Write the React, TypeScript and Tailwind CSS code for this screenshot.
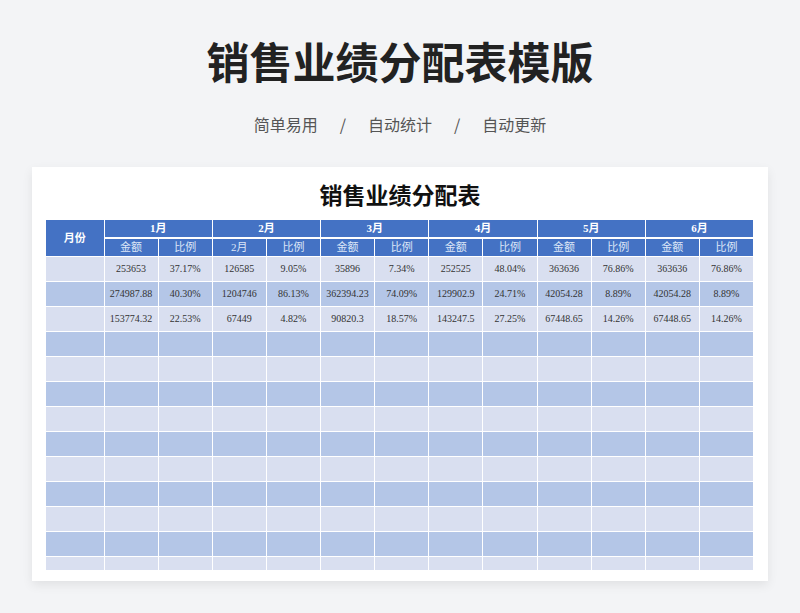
const months = ["1月", "2月", "3月", "4月", "5月", "6月"];
const sub = ["金额", "比例", "2月", "比例", "金额", "比例", "金额", "比例", "金额", "比例", "金额", "比例"];
const data = [
  ["253653", "37.17%", "126585", "9.05%", "35896", "7.34%", "252525", "48.04%", "363636", "76.86%", "363636", "76.86%"],
  ["274987.88", "40.30%", "1204746", "86.13%", "362394.23", "74.09%", "129902.9", "24.71%", "42054.28", "8.89%", "42054.28", "8.89%"],
  ["153774.32", "22.53%", "67449", "4.82%", "90820.3", "18.57%", "143247.5", "27.25%", "67448.65", "14.26%", "67448.65", "14.26%"],
];
const serif = { fontFamily: '"Liberation Serif", "Noto Sans CJK SC", serif' };

export default function App() {
  const rows = Array.from({ length: 13 }, (_, i) => data[i] ?? Array(12).fill(""));
  return (
    <div className="w-[800px] h-[613px] bg-[#f3f4f6] overflow-hidden flex flex-col items-center" style={{ fontFamily: '"Noto Sans CJK SC", sans-serif' }}>
      <h1 className="mt-[30px] text-[43px] leading-[60px] font-bold text-[#222]">销售业绩分配表模版</h1>
      <div className="mt-[22px] flex gap-[22px] text-[16px] text-[#555] leading-[24px]">
        <span>简单易用</span><span>/</span><span>自动统计</span><span>/</span><span>自动更新</span>
      </div>
      <div className="mt-[31px] w-[736px] h-[414px] bg-white shadow-[0_4px_10px_rgba(0,0,0,0.08)] px-[14px] overflow-hidden">
        <div className="h-[53px] flex items-center justify-center text-[23px] font-bold text-[#111] pt-[2px]">销售业绩分配表</div>
        <table className="border-collapse table-fixed w-[708px] text-[10px] text-[#333]" style={serif}>
          <colgroup>
            <col className="w-[58px]" />
            {sub.map((_, i) => <col key={i} />)}
          </colgroup>
          <thead>
            <tr className="h-[18px] bg-[#4472c4] text-white text-[11px] font-bold">
              <th rowSpan={2} className="border border-white border-l-0 border-t-0">月份</th>
              {months.map((m) => (
                <th key={m} colSpan={2} className="border-x border-white border-b-2">{m}</th>
              ))}
            </tr>
            <tr className="h-[17px] bg-[#4472c4] text-[#dce6f7] text-[11px] font-normal">
              {sub.map((s, i) => (
                <th key={i} className="border-x border-white font-normal">{s}</th>
              ))}
            </tr>
          </thead>
          <tbody>
            {rows.map((r, i) => (
              <tr key={i} className={`${i === 12 ? "h-[14px]" : "h-[25px]"} ${i % 2 === 0 ? "bg-[#d9dff0]" : "bg-[#b4c6e7]"}`}>
                <td className="border border-white border-l-0" />
                {r.map((c, j) => (
                  <td key={j} className="border border-white text-center">{c}</td>
                ))}
              </tr>
            ))}
          </tbody>
        </table>
      </div>
    </div>
  );
}
